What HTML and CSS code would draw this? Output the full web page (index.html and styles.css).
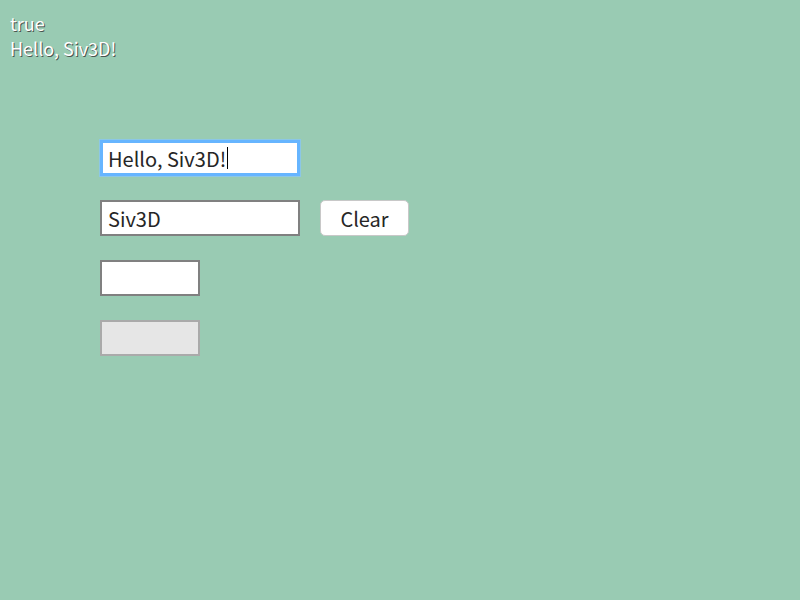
FILE: index.html
```html
<!DOCTYPE html>
<html>
<head>
<meta charset="utf-8">
<link rel="stylesheet" href="styles.css">
</head>
<body>
<div class="print">
  <div class="line">true</div>
  <div class="line">Hello, Siv3D!</div>
</div>
<div class="form">
  <div class="row">
    <div class="box wide focused"><span class="val">Hello, Siv3D!</span><span class="caret"></span></div>
  </div>
  <div class="row">
    <div class="box wide"><span class="val">Siv3D</span></div>
    <div class="btn">Clear</div>
  </div>
  <div class="row">
    <div class="box narrow"></div>
  </div>
  <div class="row">
    <div class="box narrow disabled"></div>
  </div>
</div>
</body>
</html>
```
FILE: styles.css
```css
html, body {
  margin: 0;
  padding: 0;
  background: #99cbb3;
  width: 800px;
  height: 600px;
  overflow: hidden;
  font-family: "Noto Sans CJK JP", "Noto Sans", sans-serif;
}
.print {
  padding: 11px 0 0 10px;
  height: 129px;
  box-sizing: border-box;
}
.line {
  color: #ffffff;
  font-size: 18px;
  line-height: 25px;
  text-shadow: 1px 1px 0 #4a5550;
}
.form {
  display: flex;
  flex-direction: column;
  gap: 24px;
  padding-left: 100px;
  padding-top: 11px;
}
.row {
  display: flex;
  gap: 20px;
  height: 36px;
}
.box {
  box-sizing: border-box;
  height: 36px;
  background: #fff;
  border: 2px solid #808080;
  display: flex;
  align-items: center;
  padding-left: 6px;
  font-size: 20px;
  color: #262626;
}
.wide { width: 200px; }
.narrow { width: 100px; }
.focused {
  border: 3px solid #66b5ff;
  padding-left: 5px;
  box-shadow: 0 0 0 1px #8cc7e6;
}
.disabled {
  background: #e6e6e6;
  border-color: #aaaaaa;
}
.caret {
  display: inline-block;
  width: 1px;
  height: 22px;
  background: #000;
  margin-left: 1px;
}
.btn {
  box-sizing: border-box;
  width: 89px;
  height: 36px;
  background: #fff;
  border: 1px solid #c8c8c8;
  border-radius: 5px;
  display: flex;
  align-items: center;
  justify-content: center;
  font-size: 20px;
  color: #262626;
}
```
